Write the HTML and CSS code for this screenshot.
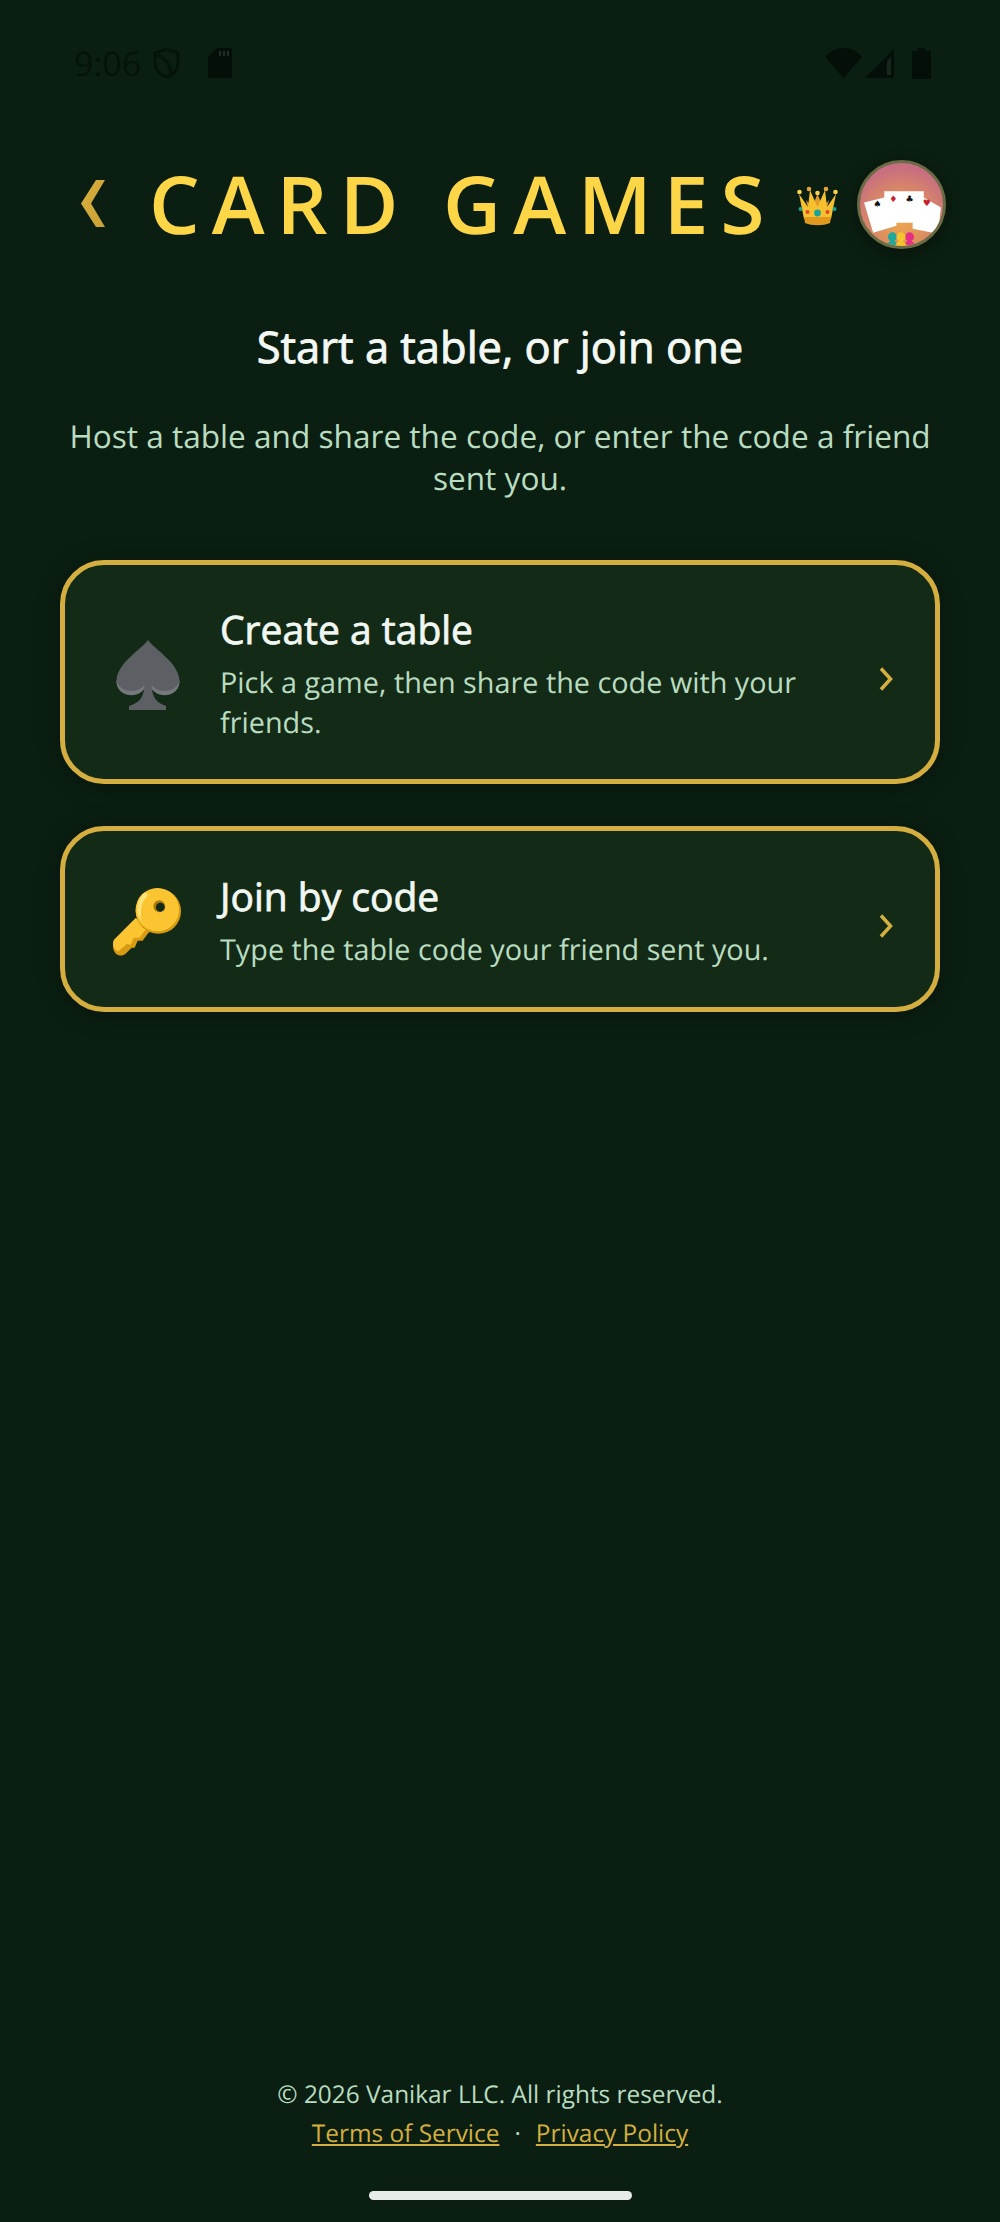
FILE: index.html
```html
<!DOCTYPE html>
<html lang="en">
<head>
    <meta charset="UTF-8">
    <meta name="viewport" content="width=device-width, initial-scale=1.0">
    <title>Card Games</title>
    <link rel="stylesheet" href="styles.css">
</head>
<body>

<div class="status-bar">
    <div class="status-left">
        <span class="clock">9:06</span>
        <svg class="shield" width="27" height="32" viewBox="0 0 27 32" fill="none" stroke="#05140b" stroke-width="3"><path d="M13.5 2 L25 6 V15 C25 23 20 28 13.5 30 C7 28 2 23 2 15 V6 Z"/><path d="M5 8 C12 12 20 18 17 29"/></svg>
        <svg class="sd" width="24" height="30" viewBox="0 0 24 30"><path d="M9 0 H24 V30 H0 V9 Z" fill="#030f07"/><path d="M11 3 h2 v5 h-2z M15 3 h2 v5 h-2z M19 3 h2 v5 h-2z" fill="#1c3023"/></svg>
    </div>
    <div class="status-right">
        <svg width="37" height="30" viewBox="0 0 37 30"><path d="M0 9 C10 -3 27 -3 37 9 L18.500 30 Z" fill="#030f07"/></svg>
        <svg width="29" height="29" viewBox="0 0 29 29"><path d="M29 0 V29 H0 Z" fill="#030f07"/><path d="M22 12 L26 8 V26 H22 Z" fill="#16281b"/></svg>
        <svg class="battery" width="19" height="31" viewBox="0 0 19 31"><path d="M6 0 H13 V3 H19 V31 H0 V3 H6 Z" fill="#030f07"/></svg>
    </div>
</div>

<header class="top-bar">
    <svg class="back" width="24" height="48" viewBox="0 0 24 48">
        <defs><linearGradient id="backGold" x1="0" y1="0" x2="1" y2="1"><stop offset="0" stop-color="#d9ae3c"/><stop offset="1" stop-color="#c9a235"/></linearGradient></defs>
        <path d="M24 0 L10 23.500 L24 47 H15 L0 23.500 L15 0 Z" fill="url(#backGold)"/>
    </svg>
    <h1 class="logo">CARD GAMES</h1>
    <svg class="crown" width="41" height="40" viewBox="0 0 41 40">
        <path d="M9 14 L13 30 H28 L32 14 L26 21 L20.500 8 L15 21 Z" fill="#e39a2d"/>
        <path d="M2 8 L7 33 H34 L39 8 L30 21 L28 4 L20.500 21 L13 4 L11 21 Z" fill="#f7c02f"/>
        <path d="M7 31 H34 L33 37 C26 40 15 40 8 37 Z" fill="#e0991e"/>
        <circle cx="2.500" cy="6" r="2.300" fill="#fbd34a"/><circle cx="12" cy="3" r="2.300" fill="#e8a23a"/><circle cx="20.500" cy="7" r="2.300" fill="#fbd34a"/><circle cx="29" cy="3" r="2.300" fill="#e8a23a"/><circle cx="38.500" cy="6" r="2.300" fill="#fbd34a"/>
        <circle cx="20.500" cy="27" r="3.400" fill="#17a398"/><circle cx="10.500" cy="26" r="2" fill="#e0452e"/><circle cx="30.500" cy="26" r="2" fill="#e0452e"/><circle cx="3.500" cy="23" r="2" fill="#17a398"/><circle cx="37.500" cy="23" r="2" fill="#17a398"/>
    </svg>
    <div class="avatar">
        <svg width="83" height="83" viewBox="0 0 82 82">
            <path d="M4 39 L24 34 V28 H63 V34 L80 44 L77 70 L52 65 V59 H36 V62 L13 69 Z" fill="#fff"/>
            <g class="suits">
                <text x="13" y="43" fill="#111">♠</text>
                <text x="29" y="39" fill="#c8202c">♦</text>
                <text x="45" y="39" fill="#111">♣</text>
                <text x="62" y="42" fill="#c8202c">♥</text>
            </g>
            <path d="M26 82 L32 76 L38 82 Z M35 82 L41 76 L47 82 Z M44 82 L50 76 L56 82 Z" fill="#f5c32c"/>
            <circle cx="32" cy="73" r="4.500" fill="#1ea79b"/><path d="M26 81 Q32 72 38 81 Z" fill="#1ea79b"/>
            <circle cx="49" cy="73" r="4.500" fill="#e52f83"/><path d="M43 81 Q49 72 55 81 Z" fill="#e52f83"/>
            <circle cx="40.500" cy="73" r="4.500" fill="#f5c32c"/><path d="M35 81 Q40 72 46 81 Z" fill="#f5c32c"/>
        </svg>
    </div>
</header>

<main class="content">
    <h2 class="page-title">Start a table, or join one</h2>
    <p class="page-desc">Host a table and share the code, or enter the code a friend sent you.</p>

    <a class="option-card card-tall" href="#">
        <div class="option-icon spade-icon">
            <svg width="64" height="70" viewBox="0 0 64 70">
                <path d="M32 0 C38 9 62 22 63.500 40 C64.500 56 44 60 36 49 C37 58 41 63 50 66 V70 H13 V66 C23 63 27 58 28 49 C20 60 -0.500 56 0.500 40 C2 22 26 9 32 0 Z" fill="#5c6065"/>
                <path d="M0.500 40 C-0.500 56 20 60 28 49 L28.500 45 C20 55 3 52 0.500 40 Z M63.500 40 C64.500 56 44 60 36 49 L35.500 45 C44 55 61 52 63.500 40 Z" fill="#74787c"/>
            </svg>
        </div>
        <div class="option-text">
            <div class="option-title">Create a table</div>
            <div class="option-sub">Pick a game, then share the code with your friends.</div>
        </div>
        <svg class="chevron" width="14" height="24" viewBox="0 0 14 24" fill="none" stroke="#d4ae3f" stroke-width="3.500"><path d="M2 1.500 L11.500 12 L2 22.500"/></svg>
    </a>

    <a class="option-card" href="#">
        <div class="option-icon key-icon">
            <svg width="70" height="70" viewBox="0 0 70 70">
                <path d="M24 33 L2 55 C0 59 1 65 5 68 C8 70 12 69 14 67 L20 61 L23 61 L26 54 L31 54 L37 46 L42 43 Z" fill="#d79c12"/>
                <path d="M24 31 L2 53 C0 56 1 62 6 65 L12 60 L15 57 L19 58 L22 51 L28 51 L33 44 L40 41 Z" fill="#fbc531"/>
                <circle cx="47" cy="24" r="23" fill="#d79c12"/>
                <circle cx="46" cy="22.500" r="22" fill="#fbc531"/>
                <path d="M32 6 C24 14 24 28 30 34 C28 24 30 14 36 9 C37 6 34 5 32 6 Z" fill="#ffe27a"/>
                <circle cx="48" cy="19" r="6" fill="#a97a0c"/>
                <circle cx="49" cy="20" r="4.500" fill="#132a17"/>
            </svg>
        </div>
        <div class="option-text">
            <div class="option-title">Join by code</div>
            <div class="option-sub">Type the table code your friend sent you.</div>
        </div>
        <svg class="chevron" width="14" height="24" viewBox="0 0 14 24" fill="none" stroke="#d4ae3f" stroke-width="3.500"><path d="M2 1.500 L11.500 12 L2 22.500"/></svg>
    </a>
</main>

<footer class="legal">
    <p>© 2026 Vanikar LLC. All rights reserved.</p>
    <p class="legal-links"><a href="#">Terms of Service</a><span class="dot">·</span><a href="#">Privacy Policy</a></p>
</footer>

<div class="home-bar"></div>

</body>
</html>
```

FILE: styles.css
```css
html, body {
    height: 100%;
}

body {
    margin: 0;
    height: 2222px;
    overflow: hidden;
    display: flex;
    flex-direction: column;
    font-family: "Open Sans", sans-serif;
    text-rendering: geometricPrecision;
    background-color: #0a1e11;
    color: #fff;
}

.status-bar {
    display: flex;
    justify-content: space-between;
    align-items: center;
    height: 30px;
    margin-top: 48px;
    padding: 0 69px 0 74px;
}

.status-left, .status-right {
    display: flex;
    align-items: center;
}

.status-left {
    color: #05140b;
}

.clock {
    font-size: 34px;
    width: 79px;
}

.sd {
    margin-left: 28px;
}

.status-right svg {
    margin-left: 3px;
}

.status-right .battery {
    margin-left: 18px;
}

.top-bar {
    display: flex;
    align-items: center;
    height: 90px;
    margin-top: 81px;
    padding-left: 81px;
}

.back {
    flex: none;
}

.logo {
    width: 632px;
    margin: 0 0 0 44px;
    font-size: 80px;
    font-weight: 600;
    line-height: 90px;
    letter-spacing: 12px;
    white-space: nowrap;
    color: #fdd648;
}

.crown {
    flex: none;
    margin-left: 16px;
    margin-top: 4px;
}

.avatar {
    flex: none;
    width: 83px;
    height: 83px;
    margin-left: 19px;
    border: 3px solid #6b6b45;
    border-radius: 50%;
    overflow: hidden;
    background: radial-gradient(circle at 50% 70%, #eda94f 0%, #dd8f5f 35%, #c76f80 75%);
    box-shadow: 0 4px 16px rgba(0, 0, 0, 0.35);
}

.avatar svg {
    display: block;
}

.suits text {
    font-size: 9px;
    font-family: "DejaVu Sans", sans-serif;
}

.content {
    flex: 1;
    padding: 0 60px;
}

.page-title {
    margin: 68px 0 0;
    font-size: 43.500px;
    font-weight: 400;
    -webkit-text-stroke: 0.9px #f3f8f3;
    line-height: 60px;
    text-align: center;
    color: #f3f8f3;
}

.page-desc {
    margin: 39px 0 0;
    font-size: 31.600px;
    line-height: 42px;
    text-align: center;
    color: #b9dcc0;
}

.option-card {
    display: flex;
    align-items: center;
    box-sizing: border-box;
    min-height: 186px;
    margin-top: 42px;
    padding: 30px 42px 30px 46px;
    border: 5px solid #d4ae3f;
    border-radius: 44px;
    background-color: #132a17;
    box-shadow: 0 2px 24px rgba(0, 0, 0, 0.25);
    text-decoration: none;
}

.card-tall {
    margin-top: 60px;
    height: 224px;
}

.option-icon {
    flex: none;
    display: flex;
    justify-content: center;
    width: 70px;
    margin-right: 39px;
}

.spade-icon {
    margin-top: 5px;
    padding-left: 3px;
    width: 67px;
}

.key-icon {
    margin-top: 5px;
    padding-left: 1px;
    width: 69px;
}

.option-text {
    flex: 1;
    margin-top: 3px;
}

.option-title {
    font-size: 39px;
    font-weight: 400;
    -webkit-text-stroke: 0.8px #f1f7f1;
    line-height: 50px;
    margin-bottom: 8px;
    color: #f1f7f1;
}

.option-sub {
    font-size: 28.800px;
    line-height: 40px;
    color: #b9dcc0;
}

.chevron {
    flex: none;
    margin-left: 40px;
    margin-top: 14px;
}

.legal {
    text-align: center;
    font-size: 24.400px;
    line-height: 39px;
    color: #b9dcc0;
}

.legal p {
    margin: 0;
}

.legal a {
    color: #d4ae3f;
}

.dot {
    margin: 0 15px;
}

.home-bar {
    align-self: center;
    width: 263px;
    height: 9px;
    margin: 38px 0 22px;
    border-radius: 5px;
    background-color: #e8ece8;
}
```
